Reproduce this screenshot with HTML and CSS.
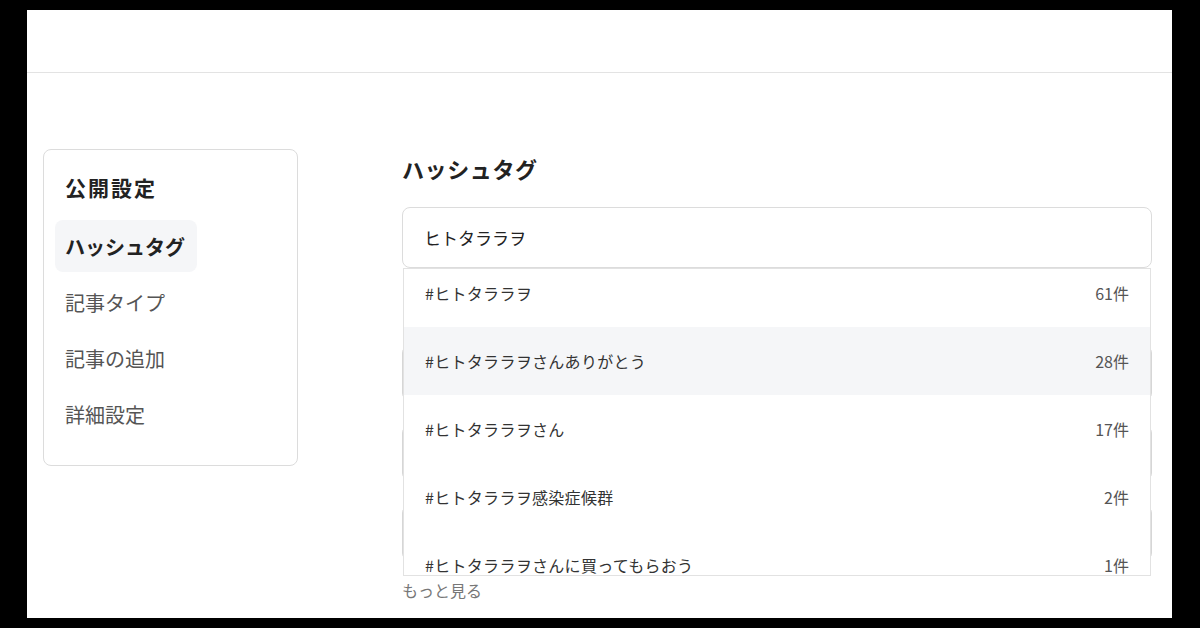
FILE: index.html
```html
<!DOCTYPE html>
<html lang="ja">

<head>
  <meta charset="UTF-8">
  <title>公開設定</title>

  <link rel="stylesheet" href="styles.css">
</head>

<body>
  <div class="screen">
    <header class="header"></header>

    <div class="content">
      <!-- 左メニュー -->
      <nav class="side-card">
        <h2 class="side-title">公開設定</h2>
        <a class="side-item active">ハッシュタグ</a>
        <a class="side-item">記事タイプ</a>
        <a class="side-item">記事の追加</a>
        <a class="side-item">詳細設定</a>
      </nav>

      <main class="main">
        <h1 class="section-title">ハッシュタグ</h1>

        <div class="tag-search">
          <div class="tag-input">ヒトタララヲ</div>

          <!-- 候補リスト -->
          <div class="suggest">
            <ul class="suggest-box">
              <li class="suggest-row"><span>#ヒトタララヲ</span><span class="count">61件</span></li>
              <li class="suggest-row hover"><span>#ヒトタララヲさんありがとう</span><span class="count">28件</span></li>
              <li class="suggest-row"><span>#ヒトタララヲさん</span><span class="count">17件</span></li>
              <li class="suggest-row"><span>#ヒトタララヲ感染症候群</span><span class="count">2件</span></li>
              <li class="suggest-row"><span>#ヒトタララヲさんに買ってもらおう</span><span class="count">1件</span></li>
            </ul>
            <a class="more">もっと見る</a>
          </div>
        </div>

        <div class="field first"></div>
        <div class="field"></div>
        <div class="field"></div>
      </main>
    </div>
  </div>
</body>

</html>
```

FILE: styles.css
```css
body {
  font-family: "Noto Sans CJK JP", "Noto Sans", sans-serif;
  background: #000;
  color: #222;
  margin: 0;
  padding: 0;
}

.screen {
  width: 1145px;
  height: 608px;
  margin: 10px 0 0 27px;
  background: #fff;
  overflow: hidden;
}

.header {
  height: 62px;
  border-bottom: 1px solid #e3e3e3;
}

.content {
  display: flex;
  align-items: flex-start;
  padding: 76px 20px 0 16px;
}

/* 左メニュー */
.side-card {
  width: 255px;
  box-sizing: border-box;
  border: 1px solid #dcdcdc;
  border-radius: 8px;
  padding: 22px 11px 25px;
  display: flex;
  flex-direction: column;
  gap: 4px;
}

.side-title {
  margin: 0 0 14px;
  padding: 0 10px;
  font-size: 21px;
  line-height: 30px;
  font-weight: bold;
  letter-spacing: 2px;
  color: #222;
}

.side-item {
  height: 52px;
  display: flex;
  align-items: center;
  padding: 0 10px;
  width: fit-content;
  border-radius: 8px;
  font-size: 20px;
  color: #555;
}

.side-item.active {
  background: #f5f6f8;
  color: #222;
  font-weight: bold;
  padding-right: 12px;
}

/* メイン */
.main {
  margin-left: 104px;
  width: 750px;
}

.section-title {
  margin: 3px 0 23px;
  font-size: 22px;
  line-height: 32px;
  font-weight: bold;
  letter-spacing: 0.6px;
}

.tag-search {
  position: relative;
}

.tag-input {
  height: 61px;
  box-sizing: border-box;
  border: 1px solid #dcdcdc;
  border-radius: 8px;
  padding: 0 21px;
  display: flex;
  align-items: center;
  font-size: 17px;
  color: #222;
}

.suggest {
  position: absolute;
  top: 61px;
  left: 1px;
  width: 748px;
  z-index: 2;
}

.suggest-box {
  list-style: none;
  margin: 0;
  padding: 0;
  height: 308px;
  box-sizing: border-box;
  border: 1px solid #e2e2e2;
  background: #fff;
  overflow: hidden;
}

.suggest-row {
  height: 68px;
  display: flex;
  align-items: center;
  justify-content: space-between;
  padding: 0 21px;
  font-size: 16px;
  letter-spacing: 0.3px;
  color: #333;
}

.suggest-row:first-child {
  margin-top: -10px;
}

.suggest-row.hover {
  background: #f5f6f8;
}

.count {
  color: #555;
  letter-spacing: 0;
}

.more {
  display: block;
  margin-left: -1px;
  padding-top: 3px;
  font-size: 16px;
  line-height: 22px;
  color: #777;
}

/* リストの下に隠れている入力欄 */
.field {
  height: 56px;
  margin-top: 24px;
  border: 1px solid #d6d6d6;
  border-radius: 8px;
  box-sizing: border-box;
}

.field.first {
  margin-top: 77px;
}
```
